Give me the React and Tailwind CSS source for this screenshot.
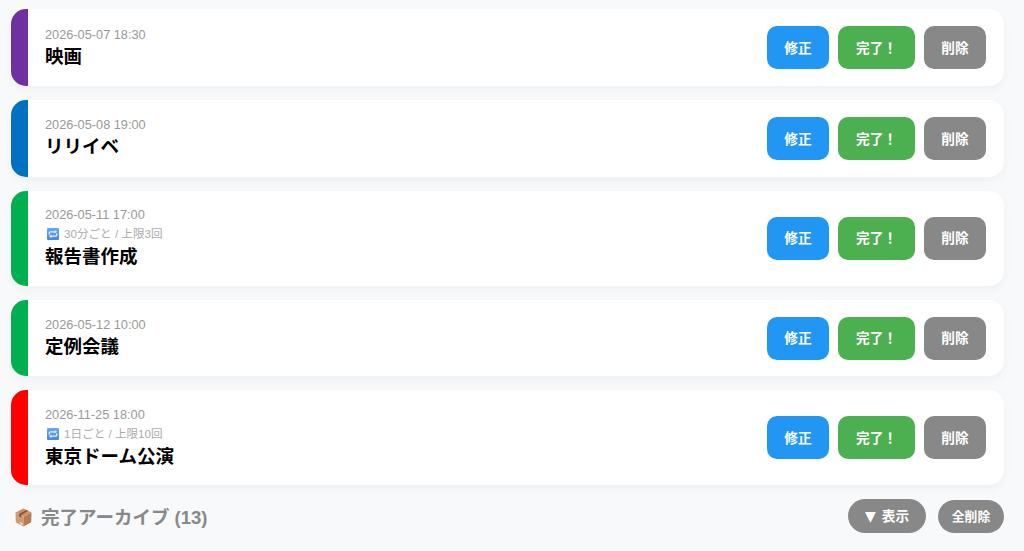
const tasks = [
  { id: 1, date: "2026-05-07 18:30", title: "映画", border: "border-[#7030a0]" },
  { id: 2, date: "2026-05-08 19:00", title: "リリイベ", border: "border-[#0070c0]" },
  { id: 3, date: "2026-05-11 17:00", title: "報告書作成", repeat: "30分ごと / 上限3回", border: "border-[#00b050]" },
  { id: 4, date: "2026-05-12 10:00", title: "定例会議", border: "border-[#00b050]" },
  { id: 5, date: "2026-11-25 18:00", title: "東京ドーム公演", repeat: "1日ごと / 上限10回", border: "border-[#ff0000]" },
];

function RepeatIcon() {
  return (
    <svg className="ml-[2px] mr-[5px] h-3 w-3 shrink-0" viewBox="0 0 12 12" fill="none">
      <defs>
        <linearGradient id="repeat-bg" x1="0" y1="0" x2="0" y2="1">
          <stop offset="0" stopColor="#62a8f5" />
          <stop offset="1" stopColor="#4a86e4" />
        </linearGradient>
      </defs>
      <rect width="12" height="12" rx="1.2" fill="url(#repeat-bg)" />
      <path d="M2.3 6.8V5.1c0-.8.5-1.3 1.3-1.3h4.6M9.7 5.2v1.7c0 .8-.5 1.3-1.3 1.3H3.8" stroke="#e4f0ff" strokeWidth="1.3" />
      <path d="M7.6 2.1 10 3.8 7.6 5.5zM4.4 6.5 2 8.2l2.4 1.7z" fill="#e4f0ff" />
    </svg>
  );
}

function BoxIcon() {
  return (
    <svg className="ml-1 mr-[9px] h-[19px] w-[18px] shrink-0" viewBox="0 0 18 19">
      <path d="M8.5.5 16.5 4.5 8.5 8.8.5 4.5z" fill="#c9936c" />
      <path d="M.5 4.5 8.5 8.8v9.7L.8 14.2z" fill="#d39a6c" />
      <path d="M16.5 4.5 8.5 8.8v9.7l7.7-4.3z" fill="#b87a50" />
      <path d="M11.4 1.9 13.2 2.8 6.2 6.9v2.6L4.2 8.4V5.9z" fill="#865237" />
      <path d="m5.2 14 2.3 1.3v1.9l-2.3-1.3z" fill="#efdde3" />
    </svg>
  );
}

function TaskCard({ task }) {
  return (
    <div
      className={`flex items-center justify-between rounded-[15px] border-l-[17px] bg-white pl-[17px] pr-[18px] shadow-[0_4px_10px_rgba(0,0,0,0.04)] ${task.border} ${task.repeat ? "h-[95px]" : "h-[76.75px]"}`}
    >
      <div className="flex flex-col">
        <div className="h-[18px] text-[12.75px] leading-[18px] text-[#999]">{task.date}</div>
        {task.repeat && (
          <div className="my-px flex h-[18px] items-center whitespace-nowrap text-[11.6px] leading-[18px] text-[#aaa]">
            <RepeatIcon />
            <span>{task.repeat}</span>
          </div>
        )}
        <div className="h-[26px] text-[18.5px] font-bold leading-[26px] text-black">{task.title}</div>
      </div>
      <div className="flex gap-[9px] text-[13.7px] font-bold text-white">
        <button className="h-[43px] w-[62px] rounded-[10px] bg-[#2196f3] pt-[3px]">修正</button>
        <button className="h-[43px] w-[77px] rounded-[10px] bg-[#4caf50] pt-[3px]">完了！</button>
        <button className="h-[43px] w-[62px] rounded-[10px] bg-[#888] pt-[3px]">削除</button>
      </div>
    </div>
  );
}

export default function App() {
  return (
    <div className="h-[551px] overflow-hidden bg-[#f8f9fb] pl-[11px] pr-5 pt-[9.2px] font-['Liberation_Sans','Noto_Sans_CJK_JP',sans-serif]">
      <div className="flex flex-col gap-[14px]">
        {tasks.map((task) => (
          <TaskCard key={task.id} task={task} />
        ))}
      </div>

      {/* Archive */}
      <div className="mt-[13.5px] flex h-[34px] items-center justify-between">
        <div className="flex items-center pt-[3px] text-[18.5px] font-bold text-[#888]">
          <BoxIcon />
          <h2 className="-ml-px pt-px">完了アーカイブ (13)</h2>
        </div>
        <div className="flex items-end gap-3 font-bold text-white">
          <button className="flex h-[34px] w-[78px] items-center justify-center gap-[6px] rounded-full bg-[#888] pt-[3px] text-[13.7px]">
            <span className="pb-[3px] font-['DejaVu_Sans'] text-[14px] leading-none">▼</span>
            <span>表示</span>
          </button>
          <button className="h-[33px] w-[66px] rounded-full bg-[#888] pt-px text-[12.8px]">全削除</button>
        </div>
      </div>
    </div>
  );
}
